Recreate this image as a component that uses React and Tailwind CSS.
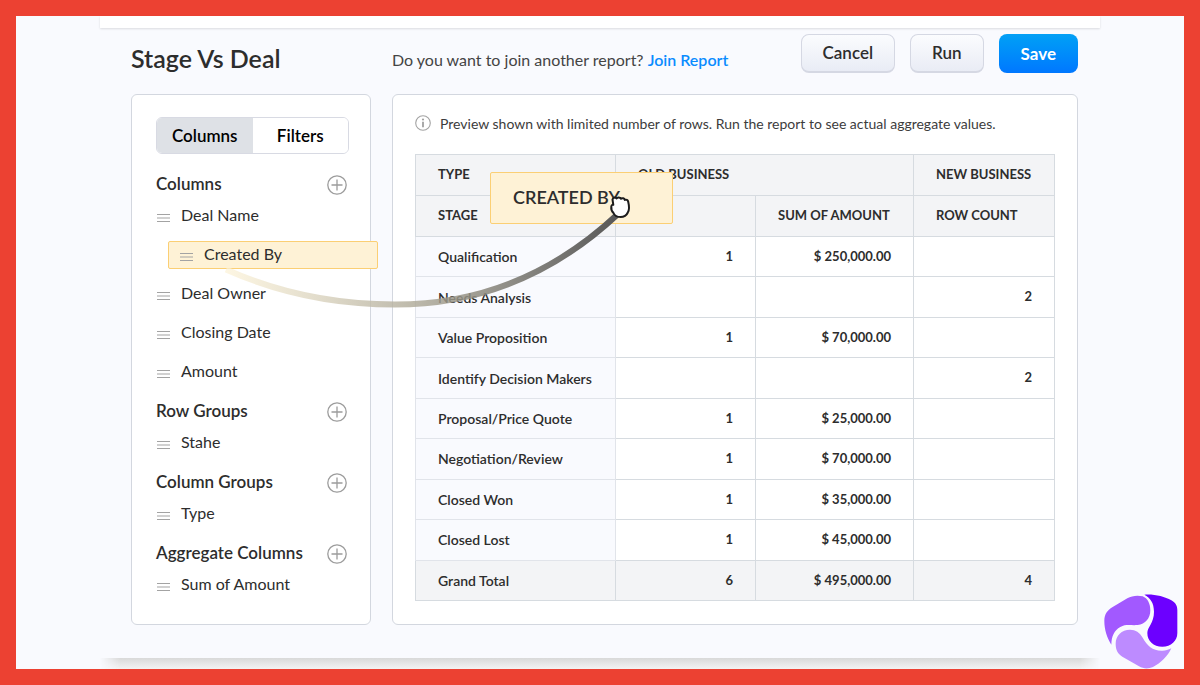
const columnItems = ["Deal Name", "Created By", "Deal Owner", "Closing Date", "Amount"];

const groups = [
  { title: "Columns", items: columnItems },
  { title: "Row Groups", items: ["Stahe"] },
  { title: "Column Groups", items: ["Type"] },
  { title: "Aggregate Columns", items: ["Sum of Amount"] },
];

const rows = [
  ["Qualification", "1", "$ 250,000.00", ""],
  ["Needs Analysis", "", "", "2"],
  ["Value Proposition", "1", "$ 70,000.00", ""],
  ["Identify Decision Makers", "", "", "2"],
  ["Proposal/Price Quote", "1", "$ 25,000.00", ""],
  ["Negotiation/Review", "1", "$ 70,000.00", ""],
  ["Closed Won", "1", "$ 35,000.00", ""],
  ["Closed Lost", "1", "$ 45,000.00", ""],
];

function GripIcon() {
  return (
    <svg className="mt-[6px] h-[10px] w-[14px] shrink-0" viewBox="0 0 14 10" aria-hidden="true">
      <path d="M1 1.5h13M1 5h13M1 8.5h13" stroke="#a3a3a3" strokeWidth="1.2" />
    </svg>
  );
}

function PlusIcon() {
  return (
    <svg className="size-5" viewBox="0 0 20 20" fill="none" stroke="#9c9c9c" aria-hidden="true">
      <circle cx="10" cy="10" r="9.2" strokeWidth="1.3" />
      <path d="M10 4.5v11M4.5 10h11" strokeWidth="1.3" />
    </svg>
  );
}

function InfoIcon() {
  return (
    <svg className="size-4 shrink-0" viewBox="0 0 16 16" aria-hidden="true">
      <circle cx="8" cy="8" r="7.3" fill="none" stroke="#a3a3a3" strokeWidth="1.1" />
      <circle cx="8" cy="4.5" r="1.1" fill="#a0a0a0" />
      <path d="M8 6.8v5.4" stroke="#a0a0a0" strokeWidth="1.8" />
    </svg>
  );
}

function Logo() {
  return (
    <svg className="absolute right-[6px] bottom-0 h-[75px] w-[74px]" viewBox="71 43 222 225" aria-hidden="true">
      <path
        fill="#a259ff"
        d="M93 195C80 174 72 150 72 124C72 104 80 92 97 82L141 56C154 48 172 46 187 50C202 56 210 72 210 92C210 116 195 134 172 136C150 138 138 132 120 142C102 152 93 170 93 195Z"
      />
      <path
        fill="#6c00ff"
        d="M192 45C222 43 252 50 273 62C286 70 291 78 291 92V160C291 184 272 201 246 201C219 201 201 184 201 160C201 142 221 130 221 96C221 70 210 54 192 45Z"
      />
      <path
        fill="#bd8bff"
        d="M106 192C106 168 124 150 149 150C166 150 178 158 187 174C200 198 218 214 246 213C256 213 264 210 273 206C262 230 242 250 218 262C204 268 190 268 176 260L126 231C112 222 106 210 106 192Z"
      />
    </svg>
  );
}

function DragTrail() {
  return (
    <svg
      className="pointer-events-none absolute top-[224px] left-[120px] h-[80px] w-[410px]"
      viewBox="220 240 410 80"
      overflow="visible"
      fill="none"
      aria-hidden="true"
    >
      <defs>
        <linearGradient id="trail" gradientUnits="userSpaceOnUse" x1="223" y1="0" x2="618" y2="0">
          <stop offset="0" stopColor="#fdf3d7" stopOpacity="0.7" />
          <stop offset="0.25" stopColor="#d9d2bd" stopOpacity="0.8" />
          <stop offset="0.5" stopColor="#aaa593" stopOpacity="0.8" />
          <stop offset="0.75" stopColor="#7d7b74" stopOpacity="0.9" />
          <stop offset="1" stopColor="#575757" />
        </linearGradient>
      </defs>
      <path
        d="M226 269.5C290 298 350 304.500 395 304.500C480 304.500 555 273 618 214"
        stroke="url(#trail)"
        strokeWidth="6"
      />
      <path
        d="M612.500 199.500C613 197.500 615.500 197 616.500 198.500C617.500 197 620 197 621 198.800C622.300 197.600 624.300 198.200 624.800 199.900C626.300 199.200 628 200 628.200 201.800C629.500 207 629.500 210 627.800 212.500C626.500 215.500 624 217 620.500 217C616.500 217 614.500 215.500 613.500 213C611.500 211 611 209 611.300 206.500C611.500 205 612.500 204.500 613.300 204.800Z"
        fill="#fff"
        stroke="#1c1c1c"
        strokeWidth="2"
        strokeLinejoin="round"
      />
    </svg>
  );
}

function FieldItem({ name, dragging }) {
  if (dragging) {
    return (
      <li className="flex h-[39px] items-center">
        <div className="-mr-8 ml-3 flex h-7 flex-1 items-center gap-[11px] rounded-xs border border-[#fbcf74] bg-[#fef2d6] pb-[2px] pl-[10px]">
          <GripIcon />
          {name}
        </div>
      </li>
    );
  }
  return (
    <li className="flex h-[39px] items-center gap-[11px] pb-[2px]">
      <GripIcon />
      {name}
    </li>
  );
}

const cell = "border border-[#d6dbe0] px-[22px] py-0";

export default function App() {
  return (
    <div className="relative flex min-h-screen flex-col border-16 border-[#ec4132] bg-[#f9fafe] font-[Lato,sans-serif] text-[#2d2d2d]">
      <div className="relative mx-auto flex w-full max-w-[1000px] flex-1 flex-col">
        <div className="h-3 shrink-0 bg-white shadow-[0_1px_2px_rgba(0,0,0,0.12)]" />
        <main className="flex-1 pr-[22px] pb-[33px] pl-[31px]">
          <header className="grid h-[66px] grid-cols-[240px_1fr] gap-x-[21px]">
            <h1 className="pt-[14px] text-[25px] leading-8 font-semibold">Stage Vs Deal</h1>
            <div className="flex items-start justify-between">
              <p className="pt-5 text-base leading-6 text-[#444]">
                Do you want to join another report?{" "}
                <a href="#join" className="font-semibold text-[#0a8cff]">
                  Join Report
                </a>
              </p>
              <div className="flex gap-[15px] pt-[6px] text-[17px] font-semibold">
                <button className="h-[39px] rounded-lg border border-b-2 border-[#d5d8e3] bg-linear-to-b from-[#fbfcfe] to-[#e9ecf5] px-[21px]">
                  Cancel
                </button>
                <button className="h-[39px] rounded-lg border border-b-2 border-[#d5d8e3] bg-linear-to-b from-[#fbfcfe] to-[#e9ecf5] px-[21px]">
                  Run
                </button>
                <button className="h-[39px] rounded-lg bg-linear-to-b from-[#05a0f5] to-[#0077ff] px-[22px] font-bold text-white">
                  Save
                </button>
              </div>
            </div>
          </header>

          <div className="grid grid-cols-[240px_1fr] gap-x-[21px]">
            <aside className="rounded-md border border-[#d3d7df] bg-white px-6 pt-[22px] pb-5">
              <div className="mr-[-3px] grid h-[37px] grid-cols-2 overflow-hidden rounded-md border border-[#d8dae3] text-[17px] font-semibold text-black">
                <button className="bg-[#dee1e6]">Columns</button>
                <button className="bg-white">Filters</button>
              </div>
              <div className="mt-[18px] flex flex-col gap-2">
                {groups.map((g) => (
                  <section key={g.title}>
                    <div className="flex h-6 items-center justify-between">
                      <h2 className="text-[17px] font-semibold">{g.title}</h2>
                      <button aria-label={`Add to ${g.title}`} className="mt-[2px] mr-[-1px]">
                        <PlusIcon />
                      </button>
                    </div>
                    <ul className="text-base">
                      {g.items.map((name) => (
                        <FieldItem key={name} name={name} dragging={name === "Created By"} />
                      ))}
                    </ul>
                  </section>
                ))}
              </div>
            </aside>

            <section className="rounded-md border border-[#d3d7df] bg-white px-[22px] pt-[18px]">
              <p className="flex h-5 items-center gap-[9px] text-[14px] text-[#3c3c3c]">
                <InfoIcon />
                Preview shown with limited number of rows. Run the report to see actual aggregate values.
              </p>
              <table className="mt-[21px] h-[447px] w-full table-fixed border-collapse text-[13px] font-bold">
                <colgroup>
                  <col className="w-[200px]" />
                  <col className="w-[140px]" />
                  <col className="w-[158px]" />
                  <col />
                </colgroup>
                <thead className="bg-[#f3f4f6] text-left whitespace-nowrap">
                  <tr className="h-[41px]">
                    <th className={cell}>TYPE</th>
                    <th className={cell} colSpan={2}>OLD BUSINESS</th>
                    <th className={cell}>NEW BUSINESS</th>
                  </tr>
                  <tr className="h-[41px]">
                    <th className={cell}>STAGE</th>
                    <th className={cell} aria-label="Created by" />
                    <th className={cell}>SUM OF AMOUNT</th>
                    <th className={cell}>ROW COUNT</th>
                  </tr>
                </thead>
                <tbody className="text-right">
                  {rows.map((r) => (
                    <tr key={r[0]} className="h-10">
                      <th className="border border-[#e1e4ea] bg-[#f9fafe] pr-2 pl-[22px] text-left text-[14px] font-semibold">{r[0]}</th>
                      <td className={cell}>{r[1]}</td>
                      <td className={cell}>{r[2]}</td>
                      <td className={cell}>{r[3]}</td>
                    </tr>
                  ))}
                  <tr className="h-10 bg-[#f3f4f6]">
                    <th className="border border-[#d6dbe0] pr-2 pl-[22px] text-left text-[14px] font-semibold">Grand Total</th>
                    <td className={cell}>6</td>
                    <td className={cell}>$ 495,000.00</td>
                    <td className={cell}>4</td>
                  </tr>
                </tbody>
              </table>
            </section>
          </div>
        </main>
        <div className="h-[11px] shrink-0 bg-linear-to-b from-[#d9d9d9] to-[#f3f3f3] mask-x-from-98% mask-x-to-100%" />

        <div className="absolute top-[156px] left-[390px] flex h-[52px] w-[183px] items-center rounded-xs border border-[#fbcf74] bg-[#fef2d6] pb-[2px] pl-[22px] text-[18px] font-semibold">
          CREATED BY
        </div>
        <DragTrail />
      </div>
      <Logo />
    </div>
  );
}
